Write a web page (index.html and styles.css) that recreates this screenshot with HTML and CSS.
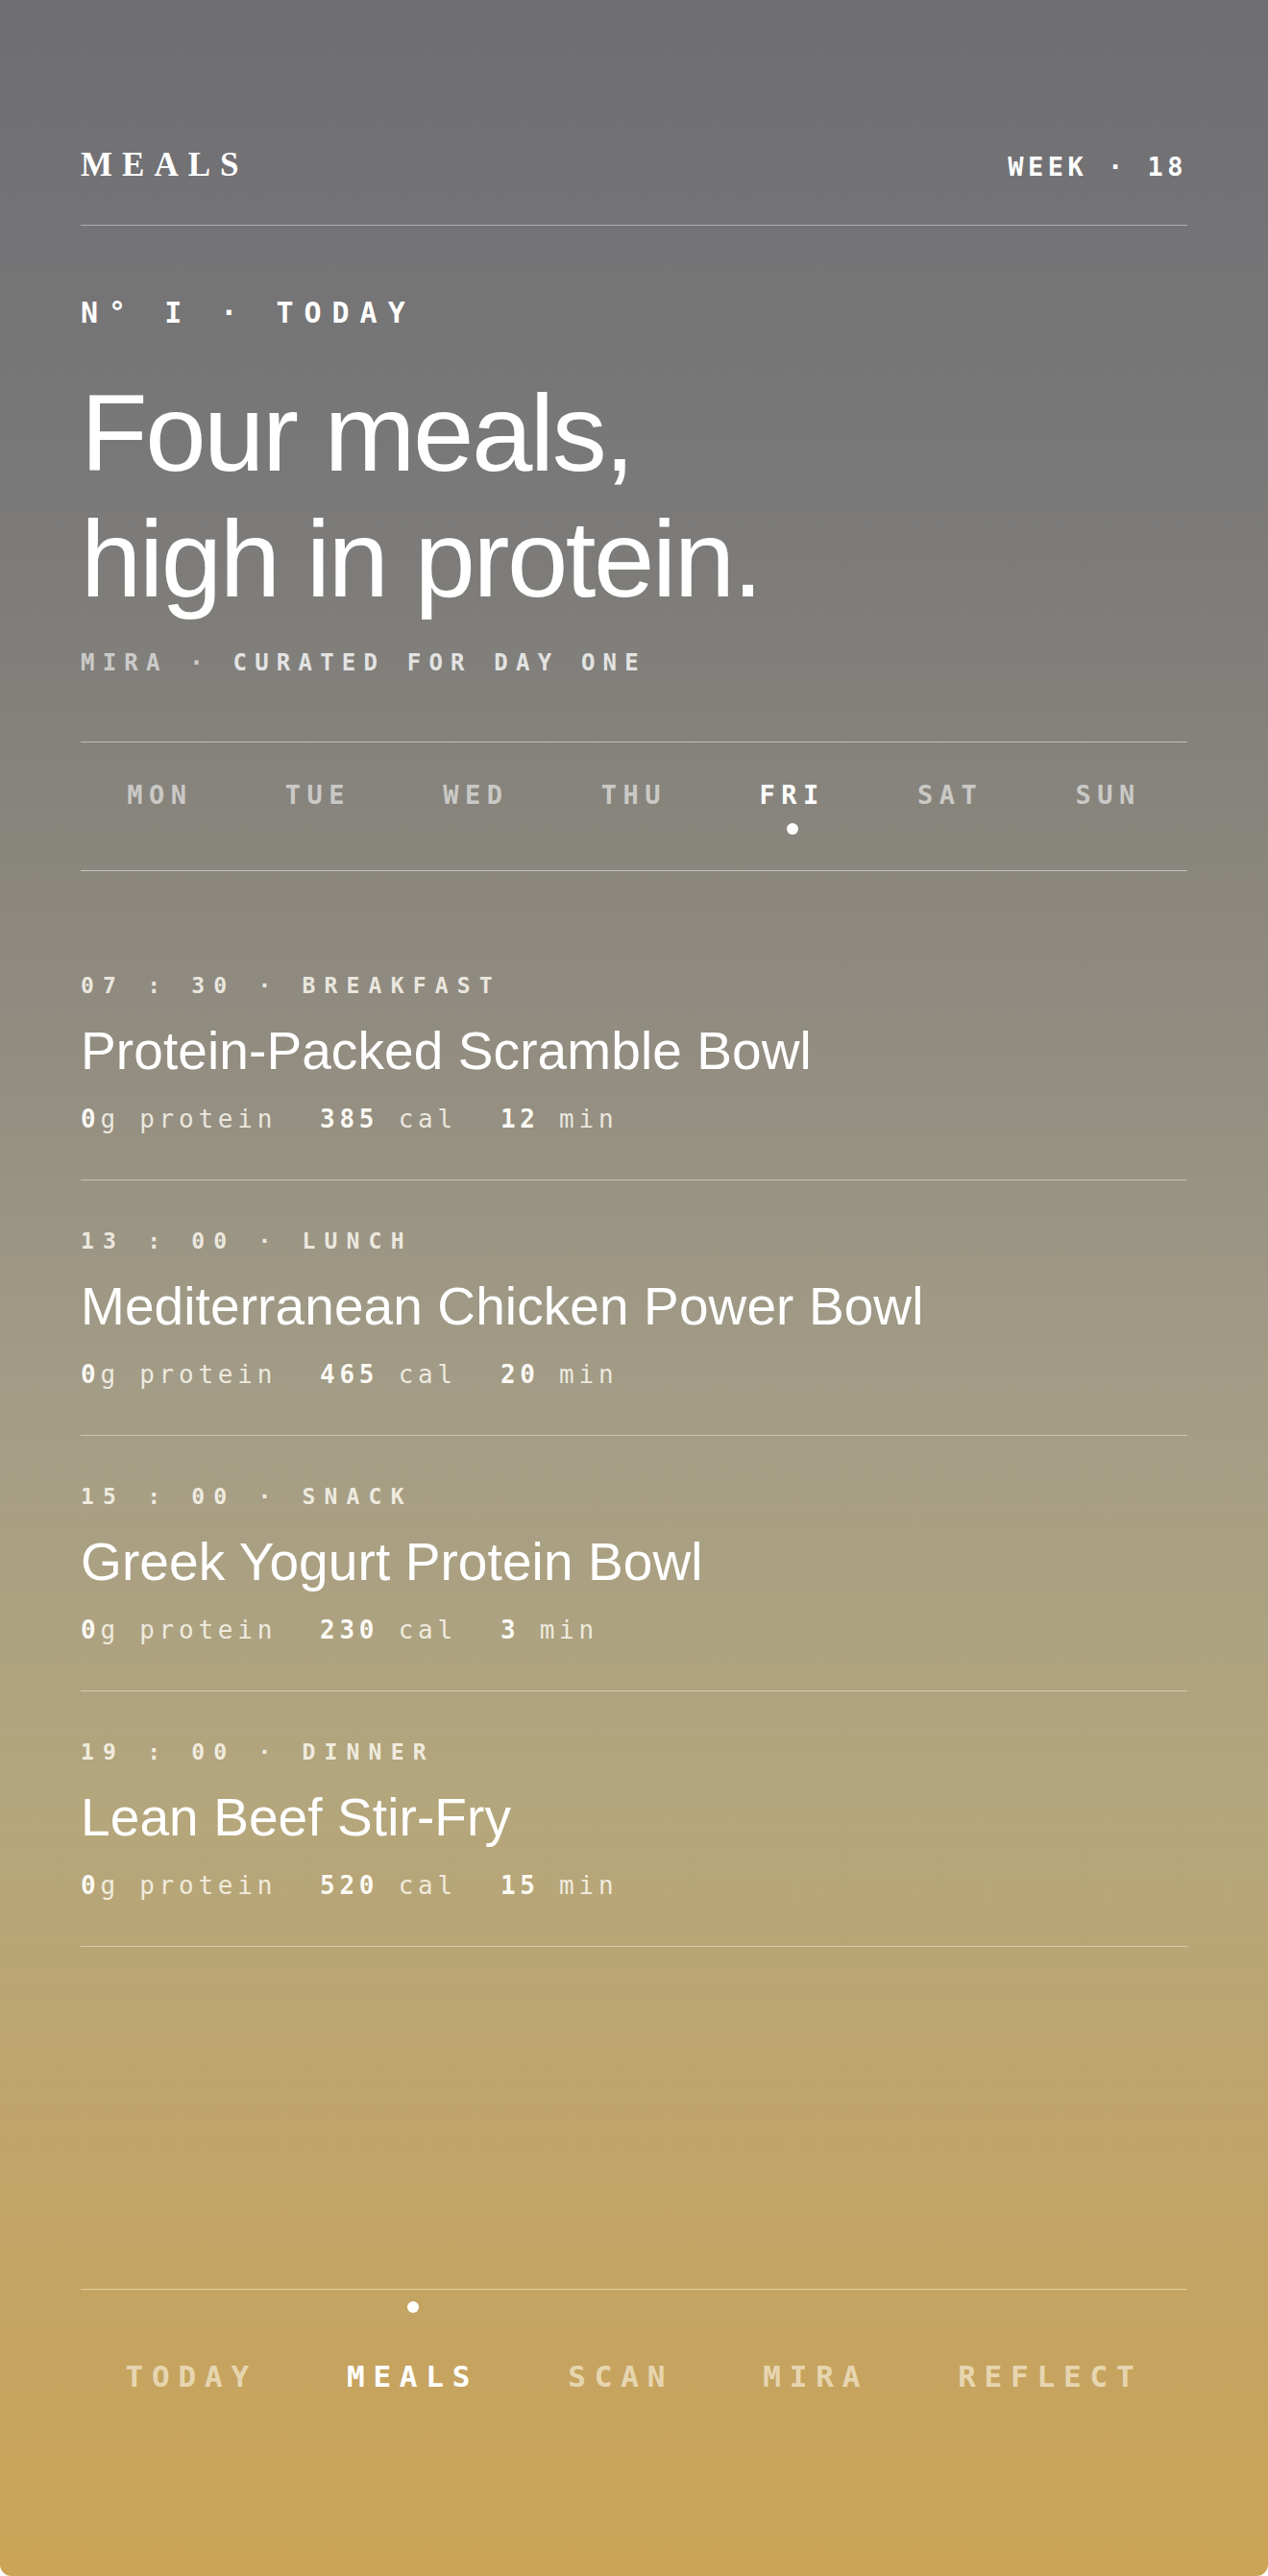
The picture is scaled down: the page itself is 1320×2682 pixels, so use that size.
FILE: index.html
```html
<!DOCTYPE html>
<html lang="en">
  <head>
    <meta charset="UTF-8" />
    <meta name="viewport" content="width=device-width, initial-scale=1.0" />
    <title>Meals</title>
    <link rel="stylesheet" href="styles.css">
  </head>
  <body>
    <div class="app">
      <header class="top">
        <span class="brand">MEALS</span>
        <span class="week">WEEK · 18</span>
      </header>

      <section class="hero">
        <p class="eyebrow">N° I · TODAY</p>
        <h1>Four meals,<br />high in protein.</h1>
        <p class="byline"><span class="dim">MIRA ·</span> CURATED FOR DAY ONE</p>
      </section>

      <div class="days">
        <span>MON</span>
        <span>TUE</span>
        <span>WED</span>
        <span>THU</span>
        <span class="active">FRI</span>
        <span>SAT</span>
        <span>SUN</span>
      </div>

      <ul class="meals">
        <li class="meal">
          <div class="meal-time">07 : 30 · BREAKFAST</div>
          <h2>Protein-Packed Scramble Bowl</h2>
          <div class="meta">
            <span><b>0</b>g protein</span>
            <span><b>385</b> cal</span>
            <span><b>12</b> min</span>
          </div>
        </li>
        <li class="meal">
          <div class="meal-time">13 : 00 · LUNCH</div>
          <h2>Mediterranean Chicken Power Bowl</h2>
          <div class="meta">
            <span><b>0</b>g protein</span>
            <span><b>465</b> cal</span>
            <span><b>20</b> min</span>
          </div>
        </li>
        <li class="meal">
          <div class="meal-time">15 : 00 · SNACK</div>
          <h2>Greek Yogurt Protein Bowl</h2>
          <div class="meta">
            <span><b>0</b>g protein</span>
            <span><b>230</b> cal</span>
            <span><b>3</b> min</span>
          </div>
        </li>
        <li class="meal">
          <div class="meal-time">19 : 00 · DINNER</div>
          <h2>Lean Beef Stir-Fry</h2>
          <div class="meta">
            <span><b>0</b>g protein</span>
            <span><b>520</b> cal</span>
            <span><b>15</b> min</span>
          </div>
        </li>
      </ul>

      <nav class="tabs">
        <a href="#">TODAY</a>
        <a href="#" class="active">MEALS</a>
        <a href="#">SCAN</a>
        <a href="#">MIRA</a>
        <a href="#">REFLECT</a>
      </nav>
    </div>
  </body>
</html>
```

FILE: styles.css
```css
body {
  margin: 0;
  background: #fff;
  font-family: "Liberation Sans", Arial, sans-serif;
}
.app {
  box-sizing: border-box;
  min-height: 2682px;
  padding: 0 84px;
  display: flex;
  flex-direction: column;
  color: #fff;
  border-radius: 0 0 12px 12px;
  background: linear-gradient(
    180deg,
    #6e6d72 0%,
    #7b7a79 20%,
    #918c80 40%,
    #a49d86 55%,
    #b4a67c 70%,
    #c1a468 85%,
    #cba456 100%
  );
}
.top {
  display: flex;
  justify-content: space-between;
  align-items: baseline;
  padding: 154px 0 45px;
  border-bottom: 1px solid rgba(255, 255, 255, 0.42);
}
.brand {
  font-family: "Liberation Serif", "Times New Roman", serif;
  font-weight: bold;
  font-size: 35px;
  line-height: 1;
  letter-spacing: 10px;
}
.week {
  font-family: "DejaVu Sans Mono", monospace;
  font-weight: bold;
  font-size: 27px;
  line-height: 1;
  letter-spacing: 4.5px;
}
.hero p,
.hero h1 {
  margin: 0;
}
.hero .eyebrow {
  margin-top: 76px;
  font-family: "DejaVu Sans Mono", monospace;
  font-weight: bold;
  font-size: 30px;
  line-height: 1;
  letter-spacing: 11px;
}
.hero h1 {
  margin-top: 44px;
  font-weight: normal;
  font-size: 114px;
  line-height: 131px;
  letter-spacing: -2.5px;
}
.hero .byline {
  margin-top: 31px;
  font-family: "DejaVu Sans Mono", monospace;
  font-weight: bold;
  font-size: 24px;
  line-height: 1;
  letter-spacing: 8.2px;
  color: rgba(255, 255, 255, 0.8);
}
.byline .dim {
  color: rgba(255, 255, 255, 0.62);
}
.days {
  margin-top: 70px;
  padding: 41px 0 65px;
  display: grid;
  grid-template-columns: repeat(7, 1fr);
  border-top: 1px solid rgba(255, 255, 255, 0.45);
  border-bottom: 1px solid rgba(255, 255, 255, 0.5);
}
.days span {
  justify-self: center;
  position: relative;
  font-family: "DejaVu Sans Mono", monospace;
  font-weight: bold;
  font-size: 27px;
  line-height: 1;
  letter-spacing: 6.5px;
  color: rgba(255, 255, 255, 0.58);
}
.days .active {
  color: #fff;
}
.days .active::after {
  content: "";
  position: absolute;
  top: calc(100% + 16px);
  left: 50%;
  width: 12px;
  height: 12px;
  margin-left: -6px;
  border-radius: 50%;
  background: #fff;
}
.meals {
  list-style: none;
  margin: 0;
  padding: 56px 0 0;
}
.meal {
  padding: 52px 0 50px;
  border-bottom: 1px solid rgba(255, 255, 255, 0.42);
}
.meal-time {
  font-family: "DejaVu Sans Mono", monospace;
  font-weight: bold;
  font-size: 23px;
  line-height: 1;
  letter-spacing: 9.2px;
  color: rgba(255, 252, 244, 0.84);
}
.meal h2 {
  margin: 25px 0 0;
  font-weight: normal;
  font-size: 55px;
  line-height: 62px;
  letter-spacing: 0.1px;
  color: #fff;
}
.meta {
  margin-top: 27px;
  display: flex;
  gap: 45px;
  font-family: "DejaVu Sans Mono", monospace;
  font-size: 26px;
  line-height: 1;
  letter-spacing: 4.75px;
  color: rgba(255, 252, 244, 0.82);
}
.meta b {
  color: rgba(255, 253, 248, 0.97);
}
.tabs {
  margin-top: auto;
  padding: 75px 0 192px;
  display: flex;
  justify-content: space-around;
  border-top: 1px solid rgba(255, 244, 205, 0.55);
}
.tabs a {
  position: relative;
  font-family: "DejaVu Sans Mono", monospace;
  font-weight: bold;
  font-size: 31px;
  line-height: 1;
  letter-spacing: 8.8px;
  text-decoration: none;
  color: rgba(255, 248, 232, 0.62);
}
.tabs .active {
  color: #fff;
}
.tabs .active::before {
  content: "";
  position: absolute;
  top: -63px;
  left: 50%;
  width: 12px;
  height: 12px;
  margin-left: -6px;
  border-radius: 50%;
  background: #fff;
}
```
